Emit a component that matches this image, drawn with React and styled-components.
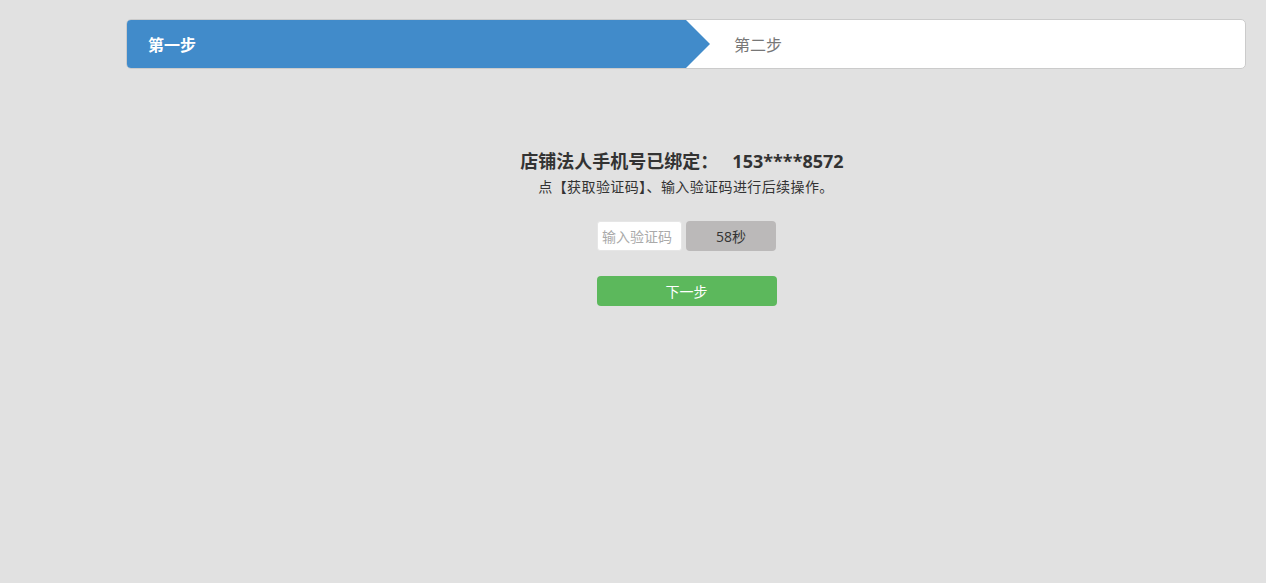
import React, { useState } from "react";
import styled, { createGlobalStyle } from "styled-components";

const GlobalStyle = createGlobalStyle`
    html, body {
        margin: 0;
        padding: 0;
        background: #e1e1e1;
        font-family: "Open Sans", "Noto Sans CJK SC", sans-serif;
    }
`;

const App = () => {
    const [code, setcode] = useState("");

    return (
        <>
            <GlobalStyle />
            <Page>
                <Steps>
                    <StepActive>
                        第一步
                        <Arrow />
                    </StepActive>
                    <Step>第二步</Step>
                </Steps>
                <Body>
                    <Title>店铺法人手机号已绑定：&nbsp;&nbsp;&nbsp;153****8572</Title>
                    <Tip>点【获取验证码】、输入验证码进行后续操作。</Tip>
                    <CodeRow>
                        <CodeInput
                            placeholder="输入验证码"
                            value={code}
                            onChange={(e) => setcode(e.target.value)}
                        />
                        <TimerBtn>58秒</TimerBtn>
                    </CodeRow>
                    <NextBtn>下一步</NextBtn>
                </Body>
            </Page>
        </>
    );
};

export default App;

const Page = styled.div`
    min-height: 583px;
    padding: 19px 20px 0 126px;
    box-sizing: border-box;
`;

const Steps = styled.div`
    display: flex;
    height: 50px;
    box-sizing: border-box;
    border: 1px solid #cbcbcb;
    border-radius: 5px;
    background: #fff;
    overflow: hidden;
`;

const StepActive = styled.div`
    position: relative;
    width: 559px;
    display: flex;
    align-items: center;
    padding-left: 21px;
    box-sizing: border-box;
    background: #418bca;
    color: #fff;
    font-size: 16px;
    font-weight: 700;
`;

const Arrow = styled.span`
    position: absolute;
    top: 0;
    right: -24px;
    width: 0;
    height: 0;
    border-top: 24px solid transparent;
    border-bottom: 24px solid transparent;
    border-left: 24px solid #418bca;
`;

const Step = styled.div`
    display: flex;
    align-items: center;
    padding-left: 48px;
    color: #777;
    font-size: 16px;
`;

const Body = styled.div`
    display: flex;
    flex-direction: column;
    align-items: center;
    padding-top: 78px;
    padding-left: 1px;
`;

const Title = styled.div`
    font-size: 18px;
    font-weight: 700;
    color: #333;
    line-height: 28px;
    margin-right: 9px;
`;

const Tip = styled.div`
    font-size: 14px;
    letter-spacing: 0.4px;
    color: #333;
    line-height: 20px;
    margin-top: 2px;
    margin-right: 1px;
`;

const CodeRow = styled.div`
    display: flex;
    gap: 4px;
    margin-top: 24px;
`;

const CodeInput = styled.input`
    width: 85px;
    height: 30px;
    box-sizing: border-box;
    border: 1px solid #e6e6e6;
    border-radius: 3px;
    padding: 0 4px;
    font-family: inherit;
    font-size: 14px;
    color: #555;
    background: #fff;
    outline: none;
    &::placeholder {
        color: #aaa;
    }
`;

const TimerBtn = styled.button`
    width: 90px;
    height: 30px;
    border: none;
    border-radius: 4px;
    background: #bbb9b9;
    color: #333;
    font-family: inherit;
    font-size: 14px;
`;

const NextBtn = styled.button`
    width: 180px;
    height: 30px;
    margin-top: 25px;
    border: none;
    border-radius: 4px;
    background: #5cb85c;
    color: #fff;
    font-family: inherit;
    font-size: 14px;
`;
